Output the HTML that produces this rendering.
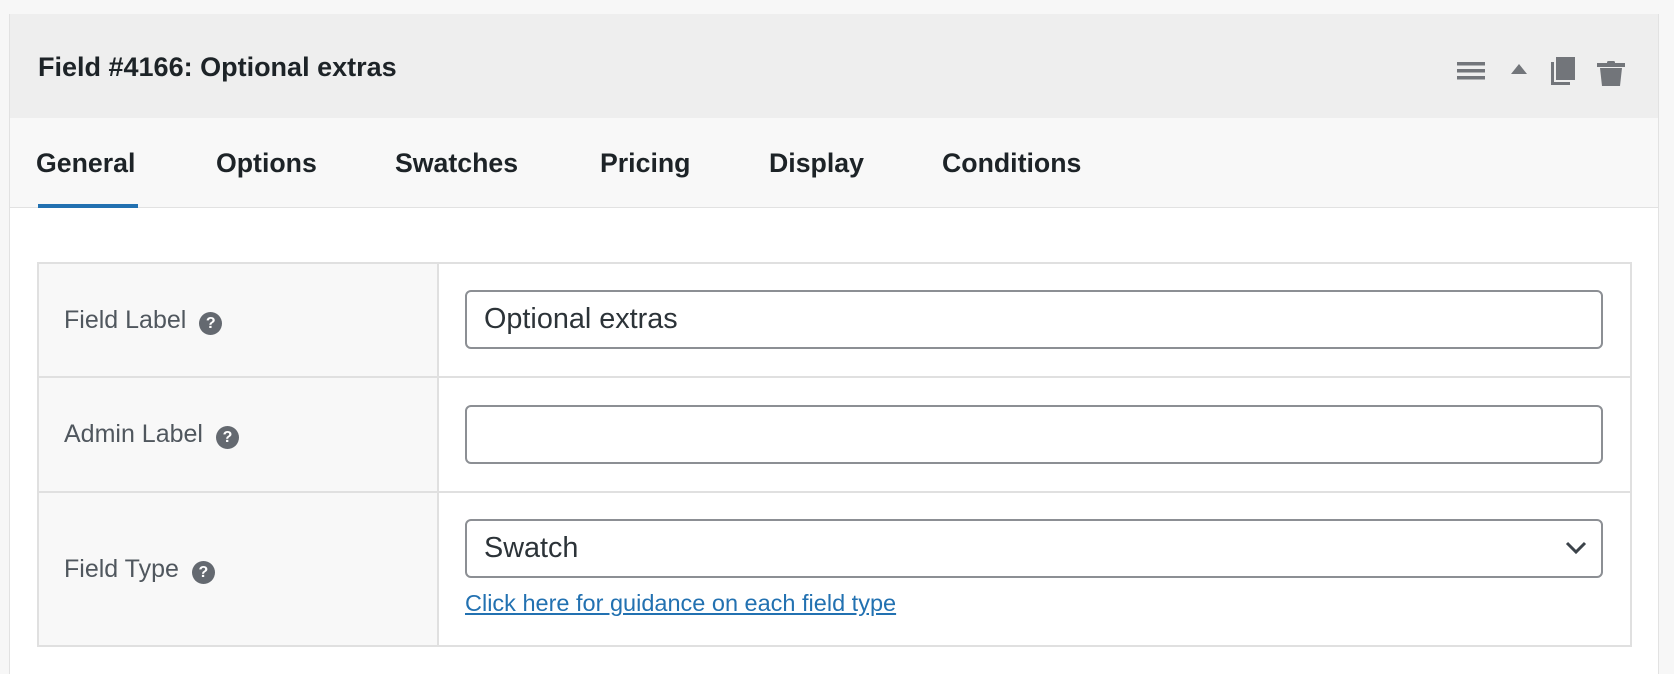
<!DOCTYPE html>
<html><head><meta charset="utf-8"><style>
*{box-sizing:border-box;margin:0;padding:0}
body{width:1674px;height:660px;background:#f7f7f7;font-family:"Liberation Sans",Arial,sans-serif;position:relative;overflow:hidden}
.panel{position:absolute;left:9px;top:14px;width:1650px;height:660px;background:#fff;border-left:1px solid #e2e2e2;border-right:1px solid #e2e2e2}
.head{position:absolute;left:0;top:0;width:100%;height:104px;background:#eeeeee}
.title{position:absolute;left:28px;top:38px;font-size:27px;font-weight:bold;color:#1d2327}
.tabs{position:absolute;left:0;top:104px;width:100%;height:90px;background:#f8f8f8;border-bottom:1px solid #e2e2e2}
.tab{position:absolute;top:30px;font-size:26.7px;font-weight:bold;color:#1d2327}
.ul{position:absolute;left:28px;top:86px;width:100px;height:4px;background:#2271b1}
table{position:absolute;left:37px;top:262px;width:1595px;border-collapse:collapse}
td{border:2px solid #e0e0e0;vertical-align:middle}
td.l{width:400px;background:#f8f8f8;padding-left:25px;font-size:25px;color:#50575e}
.q{display:inline-block;width:23px;height:23px;border-radius:50%;background:#646970;color:#fff;font-size:16px;font-weight:bold;text-align:center;line-height:23px;vertical-align:0px;margin-left:13px}
.in{position:absolute;left:465px;width:1138px;height:59px;border:2px solid #8c8f94;border-radius:6px;background:#fff;font-size:28.8px;color:#2c3338;padding-left:17px;line-height:55px}
.link{position:absolute;left:465px;top:590px;font-size:23.5px;color:#2271b1;text-decoration:underline}
</style></head><body>
<div class="panel">
<div class="head">
<div class="title">Field #4166: Optional extras</div>
<svg style="position:absolute;left:1446px;top:40px" width="180" height="40" viewBox="0 0 180 40">
<g fill="#72757a">
<rect x="1" y="8" width="28" height="3.5"/><rect x="1" y="15" width="28" height="3.5"/><rect x="1" y="22" width="28" height="3.5"/>
<polygon points="63,10 71,20 55,20"/>
<rect x="100" y="3" width="19" height="23"/><rect x="95" y="8" width="3" height="23"/><rect x="95" y="28" width="19" height="3"/>
<rect x="151" y="7" width="8" height="3" rx="1.5"/><rect x="141" y="9" width="28" height="4"/><path d="M144 14 L166 14 L164 32 L146 32 Z"/>
</g></svg>
</div>
<div class="tabs">
<div class="tab" style="left:26px">General</div>
<div class="tab" style="left:206px">Options</div>
<div class="tab" style="left:385px">Swatches</div>
<div class="tab" style="left:590px">Pricing</div>
<div class="tab" style="left:759px">Display</div>
<div class="tab" style="left:932px">Conditions</div>
<div class="ul"></div>
</div>
</div>
<table>
<tr style="height:114px"><td class="l">Field Label<span class="q">?</span></td><td></td></tr>
<tr style="height:115px"><td class="l">Admin Label<span class="q">?</span></td><td></td></tr>
<tr style="height:154px"><td class="l">Field Type<span class="q">?</span></td><td></td></tr>
</table>
<div class="in" style="top:290px">Optional extras</div>
<div class="in" style="top:405px"></div>
<div class="in" style="top:519px">Swatch
<svg style="position:absolute;right:14px;top:20px" width="22" height="14" viewBox="0 0 22 14"><path d="M2 2 L11 11 L20 2" fill="none" stroke="#3c434a" stroke-width="3"/></svg></div>
<div class="link">Click here for guidance on each field type</div>
</body></html>
